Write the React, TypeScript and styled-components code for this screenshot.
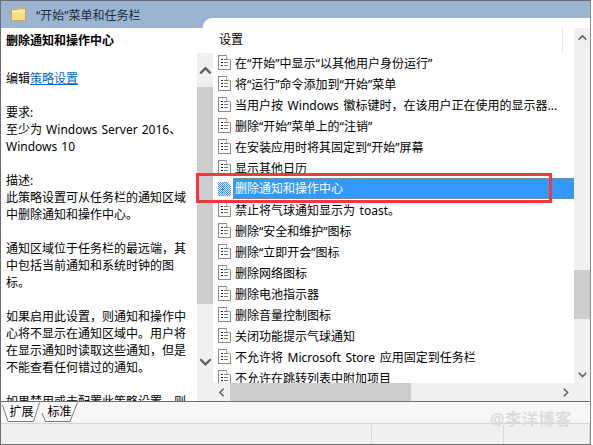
import React from "react";
import styled, { createGlobalStyle } from "styled-components";

const Global = createGlobalStyle`
  html, body { margin: 0; padding: 0; background: #fff; }
  body { font-family: "Noto Sans", "Noto Sans CJK SC", sans-serif; font-size: 12px; color: #000; }
`;

const Frame = styled.div`
  position: relative;
  width: 593px;
  height: 445px;
  overflow: hidden;
  background: #fff;
`;
const Win = styled.div`
  width: 589px;
  height: 444px;
  border-left: 1px solid #6d6d6d;
  border-right: 1px solid #8a8a8a;
  border-bottom: 1px solid #6d6d6d;
  display: flex;
  flex-direction: column;
`;
const Header = styled.div`
  position: relative;
  height: 28px;
  flex: none;
  border-top: 1px solid #6d6d6d;
  box-sizing: border-box;
  background: #9ab4d1;
  display: flex;
  align-items: flex-start;
  padding: 6px 0 0 10px;
  gap: 9px;
  &::after {
    content: "";
    position: absolute;
    left: 202px;
    right: 0;
    top: 17px;
    bottom: 0;
    background: #fff;
    border-top-left-radius: 9px;
  }
`;
const Title = styled.span`
  line-height: 17px;
  color: #1c2c3e;
`;
const Body = styled.div`
  height: 373px;
  flex: none;
  display: flex;
  background: #fff;
`;
const LeftPane = styled.div`
  width: 196px;
  height: 373px;
  flex: none;
  overflow: hidden;
  padding: 4px 0 0 5px;
  box-sizing: border-box;
  line-height: 17px;
  word-spacing: 1px;
`;
const Heading = styled.div`
  font-weight: 700;
  height: 21px;
`;
const Para = styled.p`
  margin: 0 0 17px;
  width: 186px;
`;
const Spacer = styled.div`
  height: 17px;
`;
const Link = styled.a`
  color: #0066cc;
  text-decoration: underline;
`;
const VBar = styled.div<{ $top: number }>`
  width: 16px;
  flex: none;
  margin-top: ${(p) => p.$top}px;
  background: #f0f0f0;
  display: flex;
  flex-direction: column;
`;
const ArrowCell = styled.div<{ $h: number; $align?: string }>`
  height: ${(p) => p.$h}px;
  flex: none;
  display: flex;
  justify-content: center;
  align-items: ${(p) => p.$align || "center"};
`;
const TrackGap = styled.div<{ $grow?: boolean; $h?: number }>`
  flex: ${(p) => (p.$grow ? 1 : "none")};
  height: ${(p) => (p.$h ? p.$h + "px" : "auto")};
`;
const Thumb = styled.div<{ $h: number }>`
  height: ${(p) => p.$h}px;
  flex: none;
  background: #cdcdcd;
`;
const RightPane = styled.div`
  flex: 1;
  min-width: 0;
  display: flex;
  flex-direction: column;
`;
const RightTop = styled.div`
  flex: 1;
  min-height: 0;
  display: flex;
`;
const ListCol = styled.div`
  flex: 1;
  min-width: 0;
  display: flex;
  flex-direction: column;
  overflow: hidden;
`;
const ColHead = styled.div`
  height: 24px;
  flex: none;
  padding-left: 6px;
  line-height: 24px;
  position: relative;
  &::after {
    content: "";
    position: absolute;
    right: 11px;
    top: 0;
    height: 24px;
    width: 1px;
    background: #e5e5e5;
  }
`;
const List = styled.div`
  flex: 1;
  min-height: 0;
  overflow: hidden;
`;
const Row = styled.div`
  height: 21px;
  display: flex;
  align-items: center;
  padding-left: 5px;
  white-space: nowrap;
  word-spacing: 1.5px;
`;
const RowLabel = styled.span<{ $sel?: boolean }>`
  margin-left: ${(p) => (p.$sel ? 2 : 4)}px;
  ${(p) =>
    p.$sel
      ? `flex: 1; height: 21px; line-height: 19px; box-sizing: border-box; padding-left: 1px;
         background: #3399ff; color: #fff; border: 1px dotted #c87a28; border-right: 0;`
      : ""}
`;
const HBar = styled.div`
  height: 18px;
  flex: none;
  background: #f0f0f0;
  display: flex;
  align-items: stretch;
`;
const HCell = styled.div`
  width: 17px;
  flex: none;
  display: flex;
  align-items: center;
  justify-content: center;
`;
const HThumb = styled.div`
  width: 181px;
  flex: none;
  background: #cdcdcd;
`;
const HRest = styled.div`
  flex: 1;
`;
const Corner = styled.div`
  width: 16px;
  flex: none;
`;
const TabBar = styled.div`
  height: 21px;
  flex: none;
  border-top: 1px solid #6d6d6d;
  border-bottom: 1px solid #d4d4d4;
  background: #f7f7f7;
  display: flex;
  padding-left: 1px;
`;
const Tab = styled.div<{ $w: number }>`
  position: relative;
  width: ${(p) => p.$w}px;
  height: 20px;
  line-height: 19px;
  text-align: center;
  svg { position: absolute; left: 0; top: 0; }
  span { position: relative; }
`;
const Status = styled.div`
  flex: 1;
  display: flex;
  background: #f0f0f0;
`;
const StatusCell = styled.div<{ $w?: number }>`
  ${(p) => (p.$w ? `width: ${p.$w}px; flex: none;` : "flex: 1;")}
  border-right: 1px solid #d9d9d9;
  margin-top: 1px;
  box-sizing: border-box;
`;
const Annotation = styled.div`
  position: absolute;
  left: 196px;
  top: 173px;
  width: 356px;
  height: 30px;
  box-sizing: border-box;
  border: 3px solid #f4393c;
`;
const Watermark = styled.div`
  position: absolute;
  left: 490px;
  top: 408px;
  font-size: 16px;
  font-weight: 700;
  line-height: 22px;
  color: #dcdcdc;
  letter-spacing: 0.7px;
`;

const Chev = ({ dir, size = 13, w = 2, color = "#606060" }: { dir: "up" | "down" | "left" | "right"; size?: number; w?: number; color?: string }) => {
  const pts = {
    up: "2,9 6.5,4.5 11,9",
    down: "2,4.5 6.5,9 11,4.5",
    left: "9,2 4.5,6.5 9,11",
    right: "4.5,2 9,6.5 4.5,11",
  }[dir];
  return (
    <svg width={size} height={size} viewBox="0 0 13 13">
      <polyline points={pts} fill="none" stroke={color} strokeWidth={w} />
    </svg>
  );
};

const Folder = () => (
  <svg width="16" height="15" viewBox="0 0 16 15">
    <path d="M0.5 2.5 L0.5 13.5 L14.5 13.5 L14.5 1.5 L7 1.5 L6 2.5 Z" fill="#f8dc8a" stroke="#c9a850" strokeWidth="1" />
    <path d="M1 4.5 H14" stroke="#fff0c0" strokeWidth="1.5" />
  </svg>
);

const Doc = ({ selected }: { selected?: boolean }) => (
  <svg width="13" height="15" viewBox="0 0 13 15" style={{ flex: "none" }} shapeRendering="crispEdges">
    {selected ? (
      <>
        <defs>
          <pattern id="dith" width="2" height="2" patternUnits="userSpaceOnUse">
            <rect width="2" height="2" fill="#3399ff" />
            <rect width="1" height="1" fill="#dbe9f7" />
            <rect x="1" y="1" width="1" height="1" fill="#dbe9f7" />
          </pattern>
        </defs>
        <path d="M0 1 H9 L13 5 V15 H0 Z" fill="url(#dith)" />
        <path d="M4 5 v1 M4 8 v1 M4 11 v1" stroke="#16406e" strokeWidth="1" />
      </>
    ) : (
      <>
        <path d="M0.5 0.5 H8.5 L12.5 4.5 V14.5 H0.5 Z" fill="#fff" stroke="#8c8c8c" />
        <path d="M8.5 0.5 V4.5 H12.5" fill="#eee" stroke="#b8b8b8" />
        <path d="M3 4.5 H5 M3 7.5 H5 M3 10.5 H5" stroke="#202020" strokeWidth="1" />
        <path d="M6 4.5 H10 M6 7.5 H10 M6 10.5 H10" stroke="#777" strokeWidth="1" />
      </>
    )}
  </svg>
);

const rows = [
  "在“开始”中显示“以其他用户身份运行”",
  "将“运行”命令添加到“开始”菜单",
  "当用户按 Windows 徽标键时，在该用户正在使用的显示器...",
  "删除“开始”菜单上的“注销”",
  "在安装应用时将其固定到“开始”屏幕",
  "显示其他日历",
  "删除通知和操作中心",
  "禁止将气球通知显示为 toast。",
  "删除“安全和维护”图标",
  "删除“立即开会”图标",
  "删除网络图标",
  "删除电池指示器",
  "删除音量控制图标",
  "关闭功能提示气球通知",
  "不允许将 Microsoft Store 应用固定到任务栏",
  "不允许在跳转列表中附加项目",
];

export default function App() {
  return (
    <Frame>
      <Global />
      <Win>
        <Header>
          <Folder />
          <Title>“开始”菜单和任务栏</Title>
        </Header>
        <Body>
          <LeftPane>
            <Heading>删除通知和操作中心</Heading>
            <Spacer />
            <Para>
              编辑<Link>策略设置</Link>
            </Para>
            <Para>
              要求:
              <br />
              至少为 Windows Server 2016、
              <br />
              Windows 10
            </Para>
            <Para>
              描述:
              <br />
              此策略设置可从任务栏的通知区域
              <br />
              中删除通知和操作中心。
            </Para>
            <Para>
              通知区域位于任务栏的最远端，其
              <br />
              中包括当前通知和系统时钟的图
              <br />
              标。
            </Para>
            <Para>
              如果启用此设置，则通知和操作中
              <br />
              心将不显示在通知区域中。用户将
              <br />
              在显示通知时读取这些通知，但是
              <br />
              不能查看任何错过的通知。
            </Para>
            <Para>如果禁用或未配置此策略设置，则</Para>
          </LeftPane>
          <VBar $top={25}>
            <ArrowCell $h={34}>
              <Chev dir="up" size={15} />
            </ArrowCell>
            <Thumb $h={217} />
            <TrackGap $grow />
            <ArrowCell $h={47} $align="flex-start">
              <Chev dir="down" size={15} />
            </ArrowCell>
          </VBar>
          <RightPane>
            <RightTop>
              <ListCol>
                <ColHead>设置</ColHead>
                <List>
                  {rows.map((r, i) => (
                    <Row key={r}>
                      <Doc selected={i === 6} />
                      <RowLabel $sel={i === 6}>{r}</RowLabel>
                    </Row>
                  ))}
                </List>
              </ListCol>
              <VBar $top={0}>
                <ArrowCell $h={18}>
                  <Chev dir="up" size={11} w={1.8} />
                </ArrowCell>
                <TrackGap $h={224} />
                <Thumb $h={49} />
                <TrackGap $grow />
                <ArrowCell $h={18}>
                  <Chev dir="down" size={11} w={1.8} />
                </ArrowCell>
              </VBar>
            </RightTop>
            <HBar>
              <HCell>
                <Chev dir="left" size={11} w={1.8} />
              </HCell>
              <HThumb />
              <HRest />
              <HCell>
                <Chev dir="right" size={11} w={1.8} />
              </HCell>
              <Corner />
            </HBar>
          </RightPane>
        </Body>
        <TabBar>
          <Tab $w={39}>
            <svg width="39" height="20" viewBox="0 0 39 20">
              <path d="M0.5 3 L6 19.5 H31.5 L37.5 0.5" fill="#fff" stroke="#7a7a7a" />
            </svg>
            <span>扩展</span>
          </Tab>
          <Tab $w={37}>
            <svg width="37" height="20" viewBox="0 0 37 20">
              <path d="M1 11 L4.5 19.5 H29 L36.5 0.5" fill="none" stroke="#7a7a7a" />
            </svg>
            <span>标准</span>
          </Tab>
        </TabBar>
        <Status>
          <StatusCell $w={371} />
          <StatusCell $w={132} />
          <StatusCell />
        </Status>
      </Win>
      <Annotation />
      <Watermark>@李洋博客</Watermark>
    </Frame>
  );
}
